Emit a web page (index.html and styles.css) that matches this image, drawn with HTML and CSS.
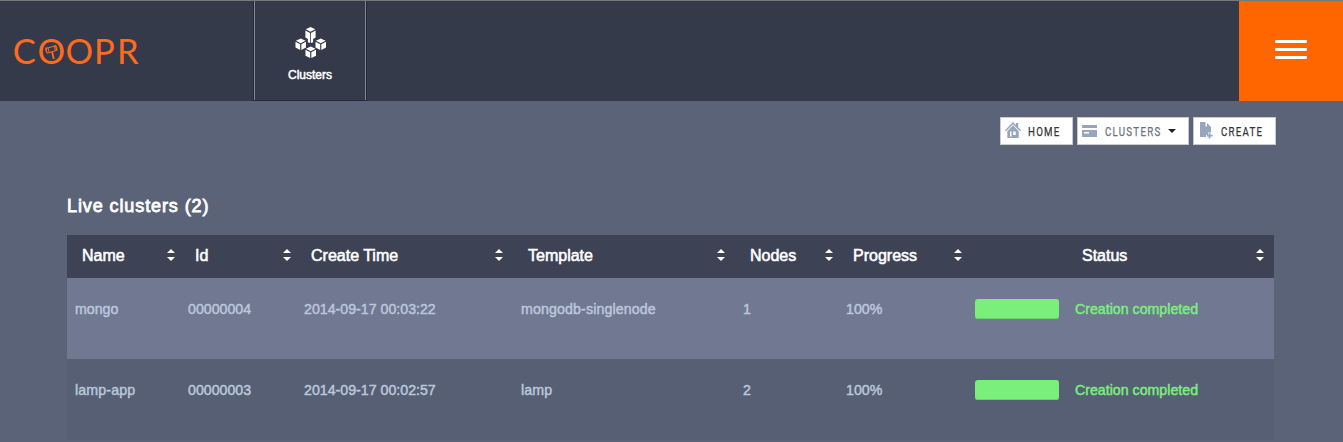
FILE: index.html
```html
<!DOCTYPE html>
<html lang="en">
<head>
<meta charset="utf-8">
<title>Coopr</title>
<link rel="stylesheet" href="styles.css">
</head>
<body>
<svg class="defs" width="0" height="0">
  <symbol id="sort" viewBox="0 0 8 12"><path d="M0 4 4 0l4 4zM0 8l4 4 4-4z" fill="#fff"/></symbol>
  <symbol id="cube" viewBox="0 0 12 12"><path d="M6 0l5 2.4L6 5 1 2.4zM.5 3.5 5.4 6v6L.5 9.6zM11.5 3.5 6.6 6v6l4.9-2.4z" fill="#fff"/></symbol>
</svg>
<header class="top">
  <svg class="logo" width="140" height="40" viewBox="0 0 140 40">
    <text class="logo-text" x="12.7 37.4 65.4 94 117" y="33.4">COOPR</text>
    <g fill="none" stroke="#ff6a1f" stroke-width="1">
      <path d="M46 17.5l9.500-2.700 1.200 4.600-9.500 2.800z"/>
      <path d="M47.800 16.200l1.500 5.600M54 14.500l1.500 5.400"/><path d="M52 20.800l1.800 7.200" stroke-width="1.800"/>
      <path d="M46 16.200q-1.500 3 1.300 6M55.400 14q2.500 2.500 1.300 6"/>
    </g>
  </svg>
  <a class="nav-item">
    <svg width="32" height="32" viewBox="0 0 32 32">
      <path d="M15.5 0l4.8 2.3-4.8 2.5-4.8-2.5zM10.4 3.4l4.7 2.5v10l-2.2-.7V12l-2.500-1.500zM20.6 3.4l-4.7 2.5v10l2.2-.7V12l2.500-1.500z" fill="#fff"/>
      <use href="#cube" x="0" y="10.4" width="11.5" height="13.5"/>
      <use href="#cube" x="20" y="10.4" width="11.5" height="13.5"/>
      <use href="#cube" x="10" y="18.5" width="11.5" height="13.5"/>
    </svg>
    <span>Clusters</span>
  </a>
  <div class="menu"><i></i><i></i><i></i></div>
</header>
<nav class="actions">
  <a class="btn home">
    <svg width="16" height="16" viewBox="0 0 16 16"><path d="M0 8.2 8 0l3 3V1h2.2v4.2L16 8.2l-1 1-7-7-7 7zM2.3 9.3 8 3.3l5.7 6V16H2.3z" fill="#98a6bc"/><path d="M5 9.5h1.500v5H5zM8.2 9.5h2.500v3.500H8.200z" fill="#fff"/></svg>
    <span>HOME</span>
  </a>
  <a class="btn clusters">
    <svg width="15" height="12" viewBox="0 0 15 12"><path d="M0 0h15v3H0zM0 5h15v7H0z" fill="#98a6bc"/><path d="M2 7h5v1.5H2z" fill="#fff"/></svg>
    <span>CLUSTERS</span>
    <svg class="caret" width="8" height="4" viewBox="0 0 8 4"><path d="M0 0h8L4 4z" fill="#222"/></svg>
  </a>
  <a class="btn create">
    <svg width="13" height="17" viewBox="0 0 13 17"><path d="M0 0h5.500v4l1.500 1V1l4 4v5.500H8V13H6v2H0z" fill="#98a6bc"/><path d="M9.500 11v5.500M7 13.700h5.500" stroke="#98a6bc" stroke-width="1.700"/></svg>
    <span>CREATE</span>
  </a>
</nav>
<main class="content">
  <h1>Live clusters (2)</h1>
  <div class="row head">
    <div>Name<svg class="sort"><use href="#sort"/></svg></div>
    <div>Id<svg class="sort"><use href="#sort"/></svg></div>
    <div class="wide">Create Time<svg class="sort"><use href="#sort"/></svg></div>
    <div class="wide">Template<svg class="sort"><use href="#sort"/></svg></div>
    <div>Nodes<svg class="sort"><use href="#sort"/></svg></div>
    <div>Progress<svg class="sort"><use href="#sort"/></svg></div>
    <div></div>
    <div class="wide">Status<svg class="sort"><use href="#sort"/></svg></div>
  </div>
  <div class="row odd">
    <div>mongo</div><div>00000004</div><div>2014-09-17 00:03:22</div><div class="template">mongodb-singlenode</div><div>1</div><div>100%</div><div><b class="bar"></b></div><div class="done">Creation completed</div>
  </div>
  <div class="row even">
    <div class="template">lamp-app</div><div>00000003</div><div>2014-09-17 00:02:57</div><div class="template">lamp</div><div>2</div><div>100%</div><div><b class="bar"></b></div><div class="done">Creation completed</div>
  </div>
</main>
</body>
</html>
```
FILE: styles.css
```css
* { box-sizing: border-box; }
body {
  margin: 0;
  height: 442px;
  overflow: hidden;
  background: #5b6378;
  font-family: "Liberation Sans", Arial, sans-serif;
  color: #fff;
}
.defs { display: none; }
.top {
  display: flex;
  height: 101px;
  background: #343a4a;
  border-top: 1px solid #777878;
}
.logo { flex: none; margin: 30px 113px 0 0; }
.logo-text { font: 400 34.5px Lato, sans-serif; fill: #ff6a1f; }
.nav-item {
  width: 114px;
  border: 1px solid #1f2a44;
  border-top: 0;
  box-shadow: inset 1px 0 #85868a, inset -1px 0 #85868a;
  display: flex;
  flex-direction: column;
  align-items: center;
  padding-top: 26px;
  font-size: 12px;
  -webkit-text-stroke: .5px #fff;
}
.nav-item svg { flex: none; margin-left: 2px; }
.nav-item span { margin-top: 9px; line-height: 14px; }
.menu {
  margin-left: auto;
  width: 104px;
  background: #ff6600;
  display: flex;
  flex-direction: column;
  align-items: center;
  gap: 5px;
  padding-top: 39px;
}
.menu i { width: 32px; height: 3px; border-radius: 1px; background: #fff; }
.actions {
  display: flex;
  justify-content: flex-end;
  gap: 4px;
  padding: 16px 67px 0 0;
}
.btn {
  display: flex;
  align-items: center;
  height: 28px;
  background: #fff;
  border: 1px solid #c9cbd0;
  color: #333;
  font: 400 13px Roboto, sans-serif;
  letter-spacing: 1.7px;
}
.btn svg { flex: none; margin-left: 4px; }
.btn span { flex: none; transform: scaleX(.745); transform-origin: 0 50%; -webkit-text-stroke: .25px; }
.home { width: 73px; }
.home svg { margin-top: -2px; }
.home span { width: 34px; margin-left: 7px; }
.clusters { width: 112px; color: #68737c; }
.clusters span { width: 59px; margin-left: 8px; }
.btn .caret { margin-left: 4px; }
.create { width: 83px; }
.create svg { margin-left: 6px; margin-top: -1px; }
.create span { margin-left: 8px; }
.content { width: 1207px; margin: 49px 0 0 67px; }
h1 {
  margin: 0;
  height: 41px;
  font-size: 18px;
  font-weight: 400;
  line-height: 24px;
  letter-spacing: .9px;
  -webkit-text-stroke: .8px #fff;
}
.row {
  display: grid;
  grid-template-columns: 113px 116px 217px 222px 103px 129px 100px 207px;
  height: 81px;
  padding-top: 21px;
  font-size: 14.2px;
  line-height: 20px;
  color: #bac8dc;
  -webkit-text-stroke: .45px;
}
.row > div { padding-left: 8px; white-space: nowrap; }
.row > .template { letter-spacing: .13px; }
.row.head {
  height: 43px;
  padding-top: 0;
  background: #3d4355;
  color: #fff;
  font-size: 16px;
  line-height: 41px;
  -webkit-text-stroke: .55px;
}
.row.head > div { display: flex; justify-content: space-between; padding: 0 5px 0 15px; }
.row.head > .wide { padding-right: 10px; }
.sort { width: 8px; height: 12px; margin-top: 14px; }
.odd { background: #717892; }
.even { background: #565f73; }
.bar {
  display: block;
  width: 84px;
  height: 20px;
  border-radius: 3px;
  background: #7af07b;
  box-shadow: inset 0 -1px #68d26c;
}
.row > .done { color: #7af07b; }
```
